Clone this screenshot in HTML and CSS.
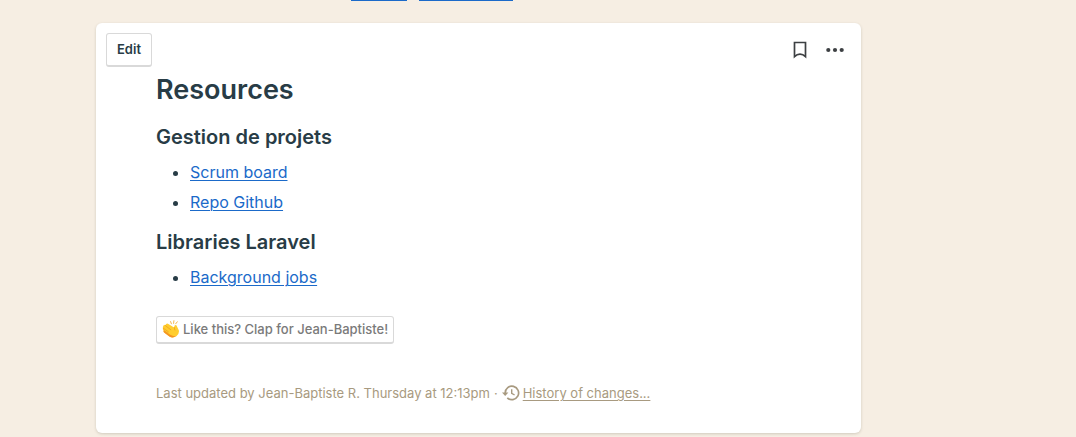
FILE: index.html
```html
<!DOCTYPE html>
<html lang="fr">
<head>
<meta charset="utf-8">
<meta name="viewport" content="width=device-width, initial-scale=1">
<title>Resources</title>
<link rel="stylesheet" href="styles.css">
</head>
<body>
<div class="page">
  <div class="trail" aria-hidden="true">
    <span class="trail-line trail-line-short"></span>
    <span class="trail-line trail-line-long"></span>
  </div>
  <main class="card">
    <div class="toolbar">
      <button class="button edit" type="button">Edit</button>
      <div class="tools">
        <button class="icon-button" type="button" aria-label="Bookmark">
          <svg width="14" height="18" viewBox="0 0 14 18" fill="none" stroke="#3d4043" stroke-width="1.7"><path d="M1.5 1.5H12.5V15.6Q10 13.2 7 13.2T1.5 15.6Z"/></svg>
        </button>
        <button class="icon-button" type="button" aria-label="More">
          <svg width="18" height="18" viewBox="0 0 18 18" fill="#3d4043"><circle cx="2.3" cy="9" r="2.1"/><circle cx="9" cy="9" r="2.1"/><circle cx="15.7" cy="9" r="2.1"/></svg>
        </button>
      </div>
    </div>
    <article class="content">
      <h1 class="title">Resources</h1>
      <h2 class="subtitle">Gestion de projets</h2>
      <ul class="links">
        <li><a class="link" href="#scrum">Scrum board</a></li>
        <li><a class="link" href="#repo">Repo Github</a></li>
      </ul>
      <h2 class="subtitle">Libraries Laravel</h2>
      <ul class="links">
        <li><a class="link" href="#jobs">Background jobs</a></li>
      </ul>
      <button class="button clap" type="button">
        <svg width="18" height="18" viewBox="0 0 18 18" aria-hidden="true">
          <path d="M1.2 6.2Q1.6 4.6 3.2 5.2L4.2 4Q5.2 3.1 6.4 4.1L12 7.6 12.6 5.4Q14.2 4.2 15 6.4L16.8 10.2Q17.6 13.6 14.6 16Q11 18.6 7.4 16.6L2.4 12.8Q1 11.4 1.8 10.4Q.2 9.2 1.1 8.1Q.6 7.2 1.2 6.2Z" fill="#ffcd2e"/>
          <path d="M2.4 12.8 7.4 16.6Q11 18.6 14.6 16Q11.4 16.8 8.2 14.8L1.8 10.4Q1 11.4 2.4 12.8Z" fill="#f59324"/>
          <path d="M1.3 8.2 6.4 11.8M3.2 5.4 8.8 9.8M1.9 10.4 5.9 13.2M12.2 7.4 12.9 10" fill="none" stroke="#ef9f22" stroke-width=".8" stroke-linecap="round"/>
          <path d="M8.6 1.6 9.4 3.8M11.9.7 11.6 3.4M15.3 1.8 13.7 3.8" fill="none" stroke="#f5b850" stroke-width="1" stroke-linecap="round"/>
        </svg>
        <span>Like this? Clap for Jean-Baptiste!</span>
      </button>
      <footer class="meta">
        <span>Last updated by Jean-Baptiste R. Thursday at 12:13pm</span>
        <span>·</span>
        <span class="history">
          <svg width="18" height="16" viewBox="0 0 18 16" fill="none" stroke="#a89a80" aria-hidden="true"><path d="M3.2 8A6.7 6.7 0 1 1 5.3 12.8" stroke-width="1.7"/><path d="M0 7.4H6.4L3.2 11Z" fill="#a89a80" stroke="none"/><path d="M9.7 4.2V8.3L12.6 10" stroke-width="1.4"/></svg>
          <a class="history-link" href="#history">History of changes...</a>
        </span>
      </footer>
    </article>
  </main>
</div>
</body>
</html>
```
FILE: styles.css
```css
* {
  box-sizing: border-box;
}

body {
  margin: 0;
  background: #f6eee3;
  color: #283c46;
  font-family: Inter, "Liberation Sans", sans-serif;
}

.page {
  padding: 0 215px 4px 96px;
}

.trail {
  display: flex;
  justify-content: center;
  gap: 12px;
  height: 23px;
  padding-right: 93px;
}

.trail-line {
  height: 1px;
  background: #1b6ac9;
}

.trail-line-short {
  width: 56px;
}

.trail-line-long {
  width: 94px;
}

.card {
  padding: 10px;
  border-radius: 6px;
  background: #fff;
  box-shadow: 0 1px 3px rgba(60, 60, 40, 0.2);
}

.toolbar {
  display: flex;
  justify-content: space-between;
  align-items: center;
}

.tools {
  display: flex;
  gap: 19px;
  padding-right: 7px;
}

.icon-button {
  display: flex;
  padding: 0;
  border: 0;
  background: none;
}

.button {
  border: 1px solid #d9d9d9;
  border-bottom-width: 2px;
  border-radius: 3px;
  background: #fff;
  color: #283c46;
  font: 600 13px/20px Inter, "Liberation Sans", sans-serif;
}

.edit {
  padding: 5px 10px 6px;
}

.content {
  padding: 4px 50px 20px;
}

.title {
  margin: 0;
  font-size: 27px;
  font-weight: 600;
  line-height: 38px;
}

.subtitle {
  margin: 14px 0 6px;
  font-size: 20px;
  font-weight: 600;
  line-height: 28px;
}

.links {
  margin: 0;
  padding-left: 34px;
  font-size: 16px;
  line-height: 30px;
}

.links + .subtitle {
  margin-top: 11px;
}

.link {
  color: #1b6ac9;
  text-underline-offset: 2px;
  text-decoration-thickness: 1px;
}

.clap {
  display: flex;
  align-items: center;
  gap: 3px;
  margin-top: 24px;
  padding: 2px 5px 3px;
  color: #7a7a7a;
  font-weight: 500;
}

.meta {
  display: flex;
  flex-wrap: wrap;
  align-items: center;
  gap: 4px;
  margin-top: 39px;
  color: #a89a80;
  font-size: 13px;
  line-height: 20px;
}

.history {
  display: flex;
  align-items: center;
  gap: 3px;
}

.history-link {
  color: inherit;
  text-underline-offset: 2px;
}
```
